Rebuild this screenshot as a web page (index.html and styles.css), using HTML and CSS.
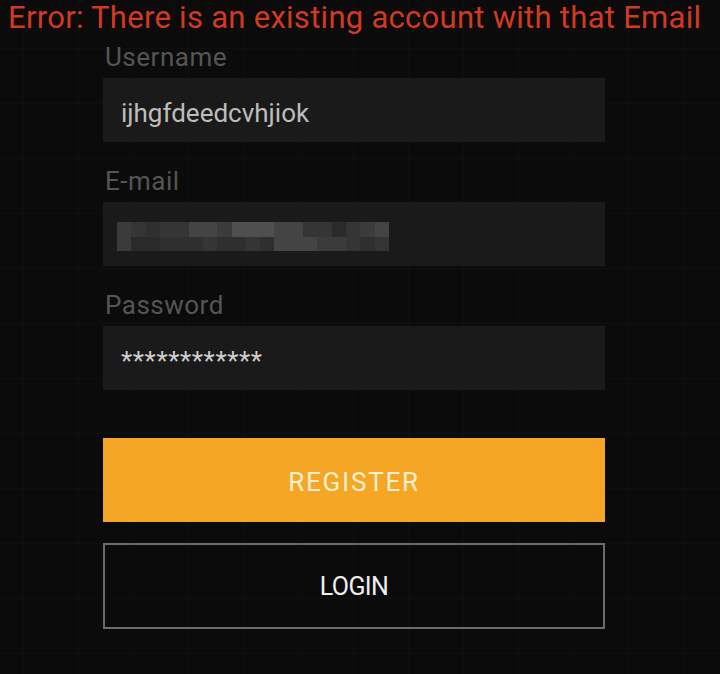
FILE: index.html
```html
<!DOCTYPE html>
<html lang="en">
<head>
<meta charset="utf-8">
<title>Register</title>
<link rel="stylesheet" href="styles.css">
</head>
<body>
<div class="page">
  <p class="error">Error: There is an existing account with that Email</p>
  <form class="form">
    <div class="group">
      <label class="label">Username</label>
      <div class="field"><span class="value">ijhgfdeedcvhjiok</span></div>
    </div>
    <div class="group">
      <label class="label">E-mail</label>
      <div class="field">
        <div class="mosaic">
          <i class="s4"></i><i class="s3"></i><i class="s2"></i><i class="s3"></i><i class="s3"></i><i class="s5"></i><i class="s5"></i><i class="s4"></i><i class="s6"></i><i class="s6"></i><i class="s6"></i><i class="s5"></i><i class="s5"></i><i class="s3"></i><i class="s3"></i><i class="s1"></i><i class="s3"></i><i class="s4"></i><i class="s5"></i>
          <i class="s4"></i><i class="s1"></i><i class="s1"></i><i class="s2"></i><i class="s2"></i><i class="s2"></i><i class="s3"></i><i class="s2"></i><i class="s2"></i><i class="s3"></i><i class="s2"></i><i class="s5"></i><i class="s5"></i><i class="s5"></i><i class="s4"></i><i class="s4"></i><i class="s3"></i><i class="s2"></i><i class="s3"></i>
        </div>
      </div>
    </div>
    <div class="group">
      <label class="label">Password</label>
      <div class="field"><span class="value stars">************</span></div>
    </div>
    <button type="button" class="btn primary">REGISTER</button>
    <button type="button" class="btn outline">LOGIN</button>
  </form>
</div>
</body>
</html>
```

FILE: styles.css
```css
html, body {
  margin: 0;
  padding: 0;
}
body {
  width: 720px;
  height: 674px;
  overflow: hidden;
  background-color: #0b0b0b;
  background-image:
    linear-gradient(to right, rgba(255,255,255,0.014) 1px, transparent 1px),
    linear-gradient(to bottom, rgba(255,255,255,0.014) 1px, transparent 1px);
  background-size: 55px 55px;
  background-position: 23px 48px;
  font-family: Roboto, "Liberation Sans", sans-serif;
}
.page {
  display: flex;
  flex-direction: column;
}
.error {
  margin: 0;
  padding-left: 8px;
  height: 36px;
  line-height: 36px;
  font-size: 31px;
  letter-spacing: 0.28px;
  color: #d3391f;
  white-space: nowrap;
}
.form {
  margin: 5px 0 0 103px;
  width: 502px;
  display: flex;
  flex-direction: column;
}
.group {
  display: flex;
  flex-direction: column;
  gap: 5px;
  margin-bottom: 23px;
}
.group:last-of-type {
  margin-bottom: 0;
}
.label {
  height: 32px;
  line-height: 32px;
  padding-left: 2px;
  font-size: 26px;
  letter-spacing: 0.5px;
  color: #555555;
}
.field {
  height: 64px;
  background: #1a1a1a;
  box-sizing: border-box;
  padding: 6px 18px 0;
  display: flex;
  align-items: flex-start;
}
.value {
  line-height: 58px;
  font-size: 26px;
  color: #bdbdbd;
}
.stars {
  color: #cfcfcf;
  letter-spacing: 0.6px;
}
.mosaic {
  margin: 14px 0 0 -4px;
  width: 272px;
  height: 29px;
  display: grid;
  grid-template-columns: repeat(19, 1fr);
  grid-template-rows: 15px 14px;
  filter: blur(0.7px);
}
.mosaic i { display: block; }
.s1 { background: #2a2a2a; }
.s2 { background: #2f2f2f; }
.s3 { background: #353535; }
.s4 { background: #3b3b3b; }
.s5 { background: #444444; }
.s6 { background: #4f4f4f; }
.btn {
  display: flex;
  align-items: center;
  justify-content: center;
  width: 502px;
  margin: 0;
  padding: 0;
  font-family: Roboto, "Liberation Sans", sans-serif;
  font-size: 26px;
  cursor: pointer;
}
.primary {
  margin-top: 48px;
  height: 84px;
  border: none;
  background: #f5a625;
  color: #fdf0d4;
  letter-spacing: 1.8px;
  padding-top: 3px;
}
.outline {
  margin-top: 21px;
  height: 86px;
  border: 2px solid #6b6b6b;
  background: transparent;
  color: #efefef;
  letter-spacing: -0.6px;
  font-size: 25px;
}
```
